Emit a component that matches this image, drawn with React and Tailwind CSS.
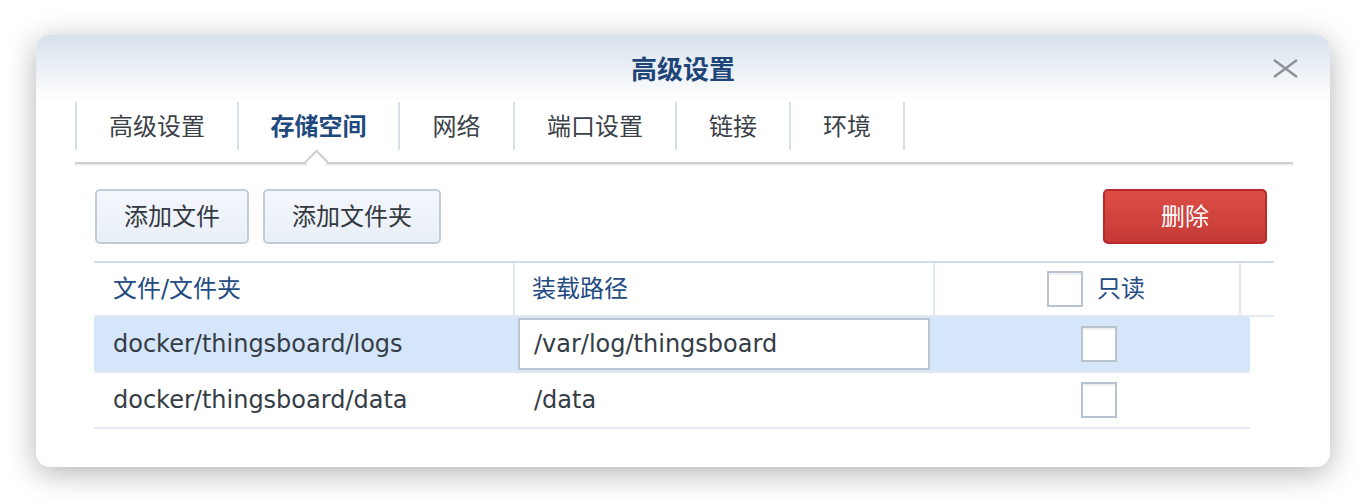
import { useState } from 'react';

const FONT = "font-['DejaVu_Sans','Noto_Sans_CJK_SC',sans-serif]";

const tabs = [
  { label: '高级设置', w: 'w-[162px]' },
  { label: '存储空间', w: 'w-[161px]' },
  { label: '网络', w: 'w-[115px]' },
  { label: '端口设置', w: 'w-[162px]' },
  { label: '链接', w: 'w-[114px]' },
  { label: '环境', w: 'w-[114px]' },
];

const rows = [
  { file: 'docker/thingsboard/logs', mount: '/var/log/thingsboard' },
  { file: 'docker/thingsboard/data', mount: '/data' },
];

function Checkbox() {
  return <div className="w-[36px] h-[36px] border-2 border-[#b9c2cf] bg-white shadow-[inset_0_2px_1px_rgba(0,0,0,0.06)]" />;
}

export default function App() {
  const [active] = useState(1);
  const [selected] = useState(0);

  return (
    <div className={`w-full h-[504px] bg-white pt-[35px] pl-[36px] ${FONT}`}>
      <div className="w-[1294px] h-[432px] rounded-[14px] bg-white shadow-[0_6px_30px_rgba(0,0,0,0.3)] overflow-hidden">
        {/* header */}
        <div className="relative h-[67px] bg-linear-to-b from-[#d7e1ec] to-white flex items-center justify-center">
          <span className="text-[26px] font-bold text-[#1d4577] leading-none pt-[3px]">高级设置</span>
          <svg className="absolute right-[32px] top-[24px]" width="25" height="19" viewBox="0 0 25 19">
            <path d="M1 1 L24 18 M24 1 L1 18" stroke="#8d9298" strokeWidth="2.4" fill="none" />
          </svg>
        </div>

        {/* tabs */}
        <div className="pl-[39px]">
          <div className="flex h-[48px]">
            {tabs.map((t, i) => (
              <div
                key={t.label}
                className={`${t.w} h-full border-l-2 border-[#d6dfea] flex items-center justify-center pt-[2px] text-[24px] ${
                  i === active ? 'font-bold text-[#1f4a80]' : 'text-[#3b4148]'
                }`}
              >
                {t.label}
              </div>
            ))}
            <div className="h-full border-l-2 border-[#d6dfea]" />
          </div>
          <div className="relative mt-[12px] w-[1218px] h-[2px] bg-[#cdcdcd] shadow-[0_1px_2px_rgba(0,0,0,0.12)]">
            <div className="absolute left-[233px] top-[-9px] w-[17px] h-[17px] rotate-45 bg-white border-t-2 border-l-2 border-[#cdcdcd]" />
          </div>
        </div>

        {/* toolbar */}
        <div className="flex items-center justify-between pl-[59px] pr-[63px] mt-[25px]">
          <div className="flex gap-[14px]">
            <button className="w-[154px] h-[55px] rounded-[5px] border-2 border-[#c2ccd9] bg-linear-to-b from-[#f4f7fc] to-[#e9eff8] text-[24px] text-[#33393f]">
              添加文件
            </button>
            <button className="w-[178px] h-[55px] rounded-[5px] border-2 border-[#c2ccd9] bg-linear-to-b from-[#f4f7fc] to-[#e9eff8] text-[24px] text-[#33393f]">
              添加文件夹
            </button>
          </div>
          <button className="w-[164px] h-[55px] rounded-[5px] border-2 border-[#b9282b] bg-linear-to-b from-[#dd4d46] to-[#c53a36] text-[24px] text-white">
            删除
          </button>
        </div>

        {/* table */}
        <div className="ml-[58px] mt-[17px] w-[1180px]">
          <div className="grid grid-cols-[421px_420px_306px_33px] h-[56px] border-t-2 border-b-2 border-t-[#d2dce8] border-b-[#e2e9f1] text-[24px] text-[#234b82]">
            <div className="border-r-2 border-[#dfe7f1] flex items-center pl-[19px]">文件/文件夹</div>
            <div className="border-r-2 border-[#dfe7f1] flex items-center pl-[17px]">装载路径</div>
            <div className="border-r-2 border-[#dfe7f1] flex items-center pl-[112px] gap-[14px]">
              <Checkbox />
              <span>只读</span>
            </div>
            <div />
          </div>
          {rows.map((r, i) => (
            <div
              key={r.file}
              className={`w-[1156px] grid grid-cols-[421px_420px_1fr] h-[56px] border-b-2 border-[#e3e9f0] text-[24px] text-[#343c45] ${
                i === selected ? 'bg-[#d6e6fa]' : ''
              }`}
            >
              <div className="flex items-center pl-[19px]">{r.file}</div>
              <div className="flex items-center pl-[3px] pr-[5px]">
                {i === selected ? (
                  <div className="w-full h-[52px] bg-white border-2 border-[#bcc6d3] flex items-center pl-[14px]">{r.mount}</div>
                ) : (
                  <span className="pl-[16px]">{r.mount}</span>
                )}
              </div>
              <div className="flex items-center pl-[146px]">
                <Checkbox />
              </div>
            </div>
          ))}
        </div>
      </div>
    </div>
  );
}
